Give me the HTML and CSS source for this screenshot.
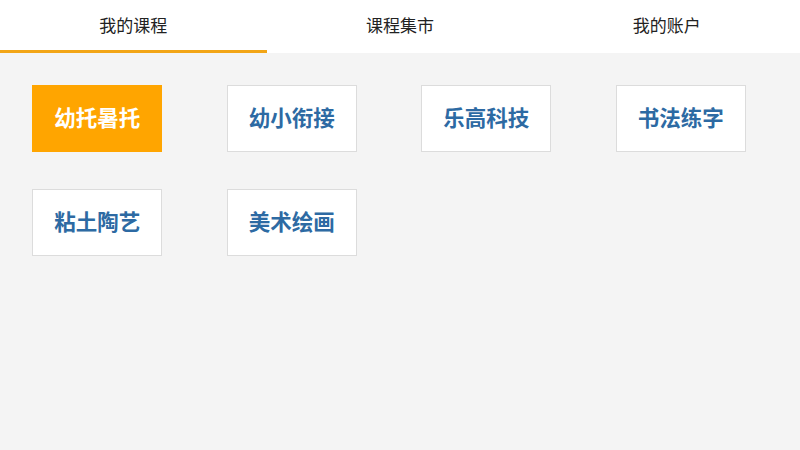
FILE: index.html
```html
<!DOCTYPE html>
<html lang="zh">
<head>
<meta charset="utf-8">
<link rel="stylesheet" href="styles.css">
</head>
<body>
<nav class="tabs">
  <div class="tab active">我的课程</div>
  <div class="tab">课程集市</div>
  <div class="tab">我的账户</div>
</nav>
<main class="grid">
  <div class="cell"><div class="tile selected">幼托暑托</div></div>
  <div class="cell"><div class="tile">幼小衔接</div></div>
  <div class="cell"><div class="tile">乐高科技</div></div>
  <div class="cell"><div class="tile">书法练字</div></div>
  <div class="cell"><div class="tile">粘土陶艺</div></div>
  <div class="cell"><div class="tile">美术绘画</div></div>
</main>
</body>
</html>
```
FILE: styles.css
```css
html, body {
  margin: 0;
  padding: 0;
  height: 100%;
}
body {
  background: #f4f4f4;
  font-family: "Noto Sans CJK SC", "Noto Sans", sans-serif;
}
.tabs {
  display: flex;
  height: 53px;
  background: #fff;
}
.tab {
  flex: 1;
  display: flex;
  align-items: center;
  justify-content: center;
  font-size: 17px;
  color: #222;
  box-sizing: border-box;
  padding-bottom: 5px;
}
.tab.active {
  border-bottom: 3px solid #f2a516;
  padding-bottom: 2px;
}
.grid {
  width: 778px;
  display: grid;
  grid-template-columns: repeat(4, 1fr);
  row-gap: 37px;
  padding-top: 32px;
}
.cell {
  display: flex;
  justify-content: center;
}
.tile {
  width: 130px;
  height: 67px;
  box-sizing: border-box;
  background: #fff;
  border: 1px solid #dcdcdc;
  display: flex;
  align-items: center;
  justify-content: center;
  padding-bottom: 5px;
  font-size: 21.5px;
  font-weight: bold;
  color: #2d6aa3;
}
.tile.selected {
  background: #ffa500;
  border-color: #ffa500;
  color: #fff;
}
```
